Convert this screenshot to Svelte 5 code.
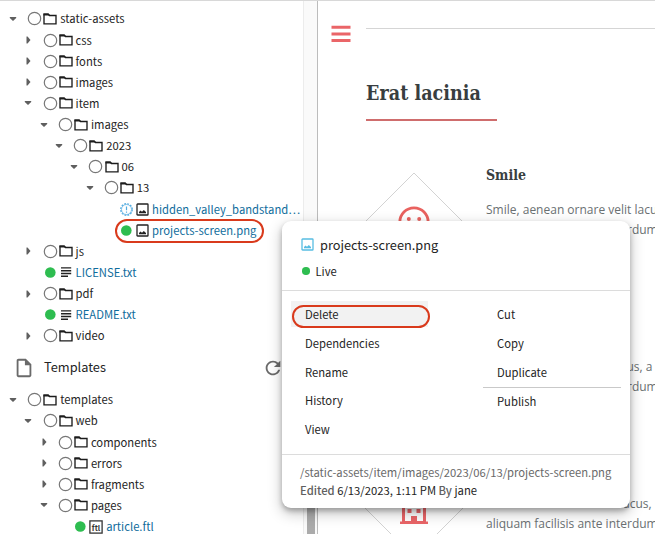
<script>
  const assets = [
    { level: 0, kind: 'open', name: 'static-assets' },
    { level: 1, kind: 'closed', name: 'css' },
    { level: 1, kind: 'closed', name: 'fonts' },
    { level: 1, kind: 'closed', name: 'images' },
    { level: 1, kind: 'open', name: 'item' },
    { level: 2, kind: 'open', name: 'images' },
    { level: 3, kind: 'open', name: '2023' },
    { level: 4, kind: 'open', name: '06' },
    { level: 5, kind: 'open', name: '13' },
    { level: 6, kind: 'image', name: 'hidden_valley_bandstand…', fresh: true },
    { level: 6, kind: 'image', name: 'projects-screen.png', marked: true },
    { level: 1, kind: 'closed', name: 'js' },
    { level: 1, kind: 'text', name: 'LICENSE.txt' },
    { level: 1, kind: 'closed', name: 'pdf' },
    { level: 1, kind: 'text', name: 'README.txt' },
    { level: 1, kind: 'closed', name: 'video' }
  ];
  const templates = [
    { level: 0, kind: 'open', name: 'templates' },
    { level: 1, kind: 'open', name: 'web' },
    { level: 2, kind: 'closed', name: 'components' },
    { level: 2, kind: 'closed', name: 'errors' },
    { level: 2, kind: 'closed', name: 'fragments' },
    { level: 2, kind: 'open', name: 'pages' },
    { level: 3, kind: 'ftl', name: 'article.ftl' }
  ];
  const leftActions = ['Delete', 'Dependencies', 'Rename', 'History', 'View'];
  const rightActions = ['Cut', 'Copy', 'Duplicate', 'Publish'];
  const isFolder = (n) => n.kind === 'open' || n.kind === 'closed';
</script>

{#snippet picture()}
  <svg class="glyph" width="13" height="13" viewBox="0 0 13 13">
    <rect x="1" y="1" width="11" height="11" rx=".6" fill="none" stroke="currentColor" stroke-width="1.3" />
    <path d="M3 10.2V9l1.5-1.5L6 8.7l1.8-1.6L10 9v1.2z" fill="currentColor" />
  </svg>
{/snippet}

{#snippet tree(nodes)}
  {#each nodes as n}
    <div class="row" style="padding-left: {n.level * 15.3}px">
      <span class="arrow">
        {#if n.kind === 'open'}
          <svg width="8" height="6" viewBox="0 0 8 6"><path d="M.8 1h6.4v1L4 5 .8 2z" fill="#5f5f5f" /></svg>
        {:else if n.kind === 'closed'}
          <svg width="6" height="8" viewBox="0 0 6 8"><path d="M1.500 .6h1L5.500 4 2.500 7.400h-1z" fill="#5f5f5f" /></svg>
        {/if}
      </span>
      <span class="state">
        {#if isFolder(n)}
          <svg width="15" height="15" viewBox="0 0 15 15"><circle cx="7.5" cy="7.5" r="6.2" fill="none" stroke="#777" stroke-width="1.2" /></svg>
        {:else if n.fresh}
          <svg width="15" height="15" viewBox="0 0 15 15">
            <circle cx="7.5" cy="7.5" r="5.8" fill="none" stroke="#52abe0" stroke-width="1.2" stroke-dasharray="1.9 1.14" />
            <circle cx="7.5" cy="7.5" r="5" fill="none" stroke="#52abe0" stroke-width=".7" />
            <path d="M7.5 4.4v3.8M7.5 9.4v1.3" stroke="#52abe0" stroke-width="1.2" />
          </svg>
        {:else}
          <svg width="15" height="15" viewBox="0 0 15 15"><circle cx="7.3" cy="7.5" r="5.3" fill="#2ebd50" /></svg>
        {/if}
      </span>
      <span class="icon">
        {#if isFolder(n)}
          <svg width="14" height="12" viewBox="0 0 14 12">
            <path d="M1 10.8V1.2h4.2l1.3 1.3H13v8.3z" fill="none" stroke="#1c1c1c" stroke-width="1.35" />
            <path d="M.5.6h5l1.8 2H.5z" fill="#1c1c1c" />
          </svg>
        {:else if n.kind === 'image'}
          {@render picture()}
        {:else if n.kind === 'text'}
          <svg width="12" height="12" viewBox="0 0 12 12"><path d="M1 1.9h10.2M1 4.7h10.2M1 7.5h10.2M1 10.3h7" stroke="#222" stroke-width="1.4" /></svg>
        {:else}
          <svg width="14" height="14" viewBox="0 0 14 14">
            <rect x=".9" y=".9" width="12.2" height="12.2" fill="none" stroke="#333" stroke-width="1.3" />
            <text x="7" y="10.8" text-anchor="middle" class="ftl">ftl</text>
          </svg>
        {/if}
      </span>
      <span class="name" class:file={!isFolder(n)}>{n.name}</span>
      {#if n.marked}<span class="marker file-marker"></span>{/if}
    </div>
  {/each}
{/snippet}

<div class="screen">
  <aside>
    {@render tree(assets)}
    <div class="section">
      <svg width="22" height="22" viewBox="0 0 24 24"><path fill="#6a6a6a" d="M14 2H6c-1.1 0-2 .9-2 2v16c0 1.1.9 2 2 2h12c1.1 0 2-.9 2-2V8zM6 20V4h7v5h5v11z" /></svg>
      <span>Templates</span>
      <svg width="22" height="22" viewBox="0 0 24 24"><path fill="#6a6a6a" d="M17.65 6.35C16.2 4.9 14.21 4 12 4c-4.42 0-7.99 3.58-7.99 8s3.57 8 7.99 8c3.73 0 6.84-2.55 7.73-6h-2.08c-.82 2.33-3.04 4-5.65 4-3.31 0-6-2.69-6-6s2.69-6 6-6c1.66 0 3.14.69 4.22 1.78L13 11h7V4z" /></svg>
    </div>
    {@render tree(templates)}
  </aside>
  <div class="track"><div class="thumb"></div></div>

  <main>
    <svg class="burger" width="20" height="18" viewBox="0 0 20 18"><path d="M.5 2.2h19M.5 9h19M.5 15.6h19" stroke="#ea6568" stroke-width="3" /></svg>
    <div class="page">
      <hr />
      <h2>Erat lacinia</h2>
      <div class="rule"></div>
      <div class="features">
        <div class="emblems">
          <svg width="100" height="100" viewBox="0 0 100 100">
            <path d="M50 1L99 50 50 99 1 50z" fill="none" stroke="#d3d3d3" />
            <circle cx="50" cy="50" r="14.2" fill="none" stroke="#e9625f" stroke-width="2.8" />
            <circle cx="44.8" cy="47" r="2" fill="#e9625f" /><circle cx="55.2" cy="47" r="2" fill="#e9625f" />
            <path d="M43 54q7 7 14 0" fill="none" stroke="#e9625f" stroke-width="2.4" />
          </svg>
          <svg width="100" height="100" viewBox="0 0 100 100">
            <path d="M50 1L99 50 50 99 1 50z" fill="none" stroke="#d3d3d3" />
            <path fill="#ea6568" fill-rule="evenodd" d="M38 36h24v27.500h2v2.500H36v-2.500h2zM41 39v24h6v-5h6v5h6V39z" />
            <path fill="#ea6568" d="M43.500 51h4v4h-4zM52.500 51h4v4h-4z" />
          </svg>
        </div>
        <div class="copy">
          <h3>Smile</h3>
          <p>Smile, aenean ornare velit lacus</p>
          <p>aliquam facilisis ante interdum</p>
          <p class="second">lacus, a</p>
          <p>aliquam facilisis ante interdum</p>
          <p class="third">lacus,</p>
          <p>aliquam facilisis ante interdum</p>
        </div>
      </div>
    </div>
  </main>

  <div class="menu">
    <header>
      <div class="title">{@render picture()}<span>projects-screen.png</span></div>
      <div class="live"><i></i><span>Live</span></div>
    </header>
    <div class="actions">
      <ul>
        {#each leftActions as a, i}
          <li class:current={i === 0}><span class="label">{a}</span>{#if i === 0}<span class="marker menu-marker"></span>{/if}</li>
        {/each}
      </ul>
      <ul>
        {#each rightActions as a}
          <li class:split={a === 'Publish'}><span class="label">{a}</span></li>
        {/each}
      </ul>
    </div>
    <footer>
      <div class="path">/static-assets/item/images/2023/06/13/projects-screen.png</div>
      <div class="edited"><b>Edited</b> 6/13/2023, 1:11 PM <b>By</b> jane</div>
    </footer>
  </div>
</div>

<style>
  :global(body) { margin: 0; background: #fff; }
  * { box-sizing: border-box; }
  .screen {
    position: relative;
    display: flex;
    width: 655px;
    height: 534px;
    overflow: hidden;
    border-top: 1px solid #d8d8d8;
    font-family: 'Noto Sans CJK SC', 'Noto Sans', sans-serif;
    font-size: 11.25px;
    color: #242424;
    background: #fff;
  }
  svg { display: block; flex: none; }
  aside { width: 303px; padding-top: 7.4px; flex: none; }
  .row { position: relative; display: flex; align-items: center; height: 21.14px; white-space: nowrap; }
  .arrow { display: flex; justify-content: center; width: 26px; flex: none; }
  .state { width: 15px; margin-left: 1.3px; flex: none; }
  .icon { display: flex; justify-content: center; width: 14px; margin: 0 2.9px 0 1.1px; flex: none; color: #222; }
  .name { line-height: 21px; }
  .file { color: #0f6c9c; }
  .ftl { font-size: 7.5px; font-weight: 700; fill: #333; }
  .marker { position: absolute; border: 2px solid #d93a1c; border-radius: 12px; }
  .file-marker { left: 115px; top: -1px; width: 149px; height: 24px; }
  .section { display: flex; align-items: center; height: 42.8px; padding-left: 13px; font-size: 12.8px; }
  .section span { margin: -2px 0 0 9px; width: 218px; }
  .track { display: flex; align-items: flex-end; width: 15px; padding-left: 3px; flex: none; background: #fafafa; border-left: 1px solid #ececec; border-right: 1px solid #bcbcbc; }
  .thumb { width: 8px; height: 60px; background: #ababab; }
  main { display: flex; flex: 1; min-width: 0; padding-left: 13px; overflow: hidden; }
  .burger { margin-top: 24px; }
  .page { margin-left: 15px; flex: 1; min-width: 0; }
  hr { height: 1px; margin: 27px 0 0; border: 0; background: #d5d5d5; }
  h2, h3 { margin: 0; font-family: 'DejaVu Serif Condensed', 'DejaVu Serif', serif; font-stretch: condensed; font-weight: 700; color: #383e40; white-space: nowrap; }
  h2 { margin-top: 50px; font-size: 19.5px; line-height: 30px; letter-spacing: .05px; }
  .rule { width: 131px; height: 2px; margin-top: 10px; background: #cf6d6d; }
  .features { display: flex; margin-top: 51px; }
  .emblems { display: flex; flex-direction: column; gap: 186px; margin-left: -2px; }
  .copy { margin-left: 22px; white-space: nowrap; font: 12px/20px 'Open Sans', sans-serif; color: #6a7072; }
  h3 { margin: -7px 0 15px; font-size: 14px; line-height: 20px; letter-spacing: 0; }
  .copy p { margin: 0; }
  .copy .second { margin: 117px 0 0 125px; }
  .copy .third { margin: 97px 0 0 134px; }
  .menu {
    position: absolute;
    left: 282px;
    top: 220px;
    width: 348px;
    height: 287px;
    border-radius: 9px;
    background: #fff;
    box-shadow: 0 3px 5px rgba(0, 0, 0, .25), 0 5px 14px 1px rgba(0, 0, 0, .22);
  }
  header { height: 70px; padding: 13px 0 0 19px; border-bottom: 1px solid #dcdcdc; }
  .title { display: flex; align-items: center; gap: 6px; height: 20px; font-size: 12.75px; }
  .title :global(.glyph) { color: #58bde2; }
  .live { display: flex; align-items: center; height: 20px; margin-top: 7px; gap: 6px; padding-left: 1px; }
  .live i { width: 7.5px; height: 7.5px; border-radius: 50%; background: #2ebd50; }
  .live span { margin-top: -1px; }
  .actions { display: flex; height: 163px; padding-top: 10px; }
  ul { list-style: none; margin: 0; padding: 0; }
  ul:first-child { width: 137px; margin: 0 55px 0 9px; }
  ul:last-child { width: 138px; }
  li { position: relative; height: 28.75px; padding-left: 14px; }
  .label { display: block; line-height: 27px; }
  .current { background: linear-gradient(#f2f2f2, #f2f2f2) 0 0 / 100% 26px no-repeat; }
  .menu-marker { left: 1px; top: 4px; width: 138px; height: 23px; }
  .split { border-top: 1px solid #c9c9c9; margin-top: -.5px; }
  .split .label { line-height: 26px; }
  footer { padding: 8px 0 0 18px; border-top: 1px solid #dcdcdc; line-height: 18px; white-space: nowrap; }
  .path { color: #696969; }
  .edited b { font-weight: 500; color: #606060; }
</style>
